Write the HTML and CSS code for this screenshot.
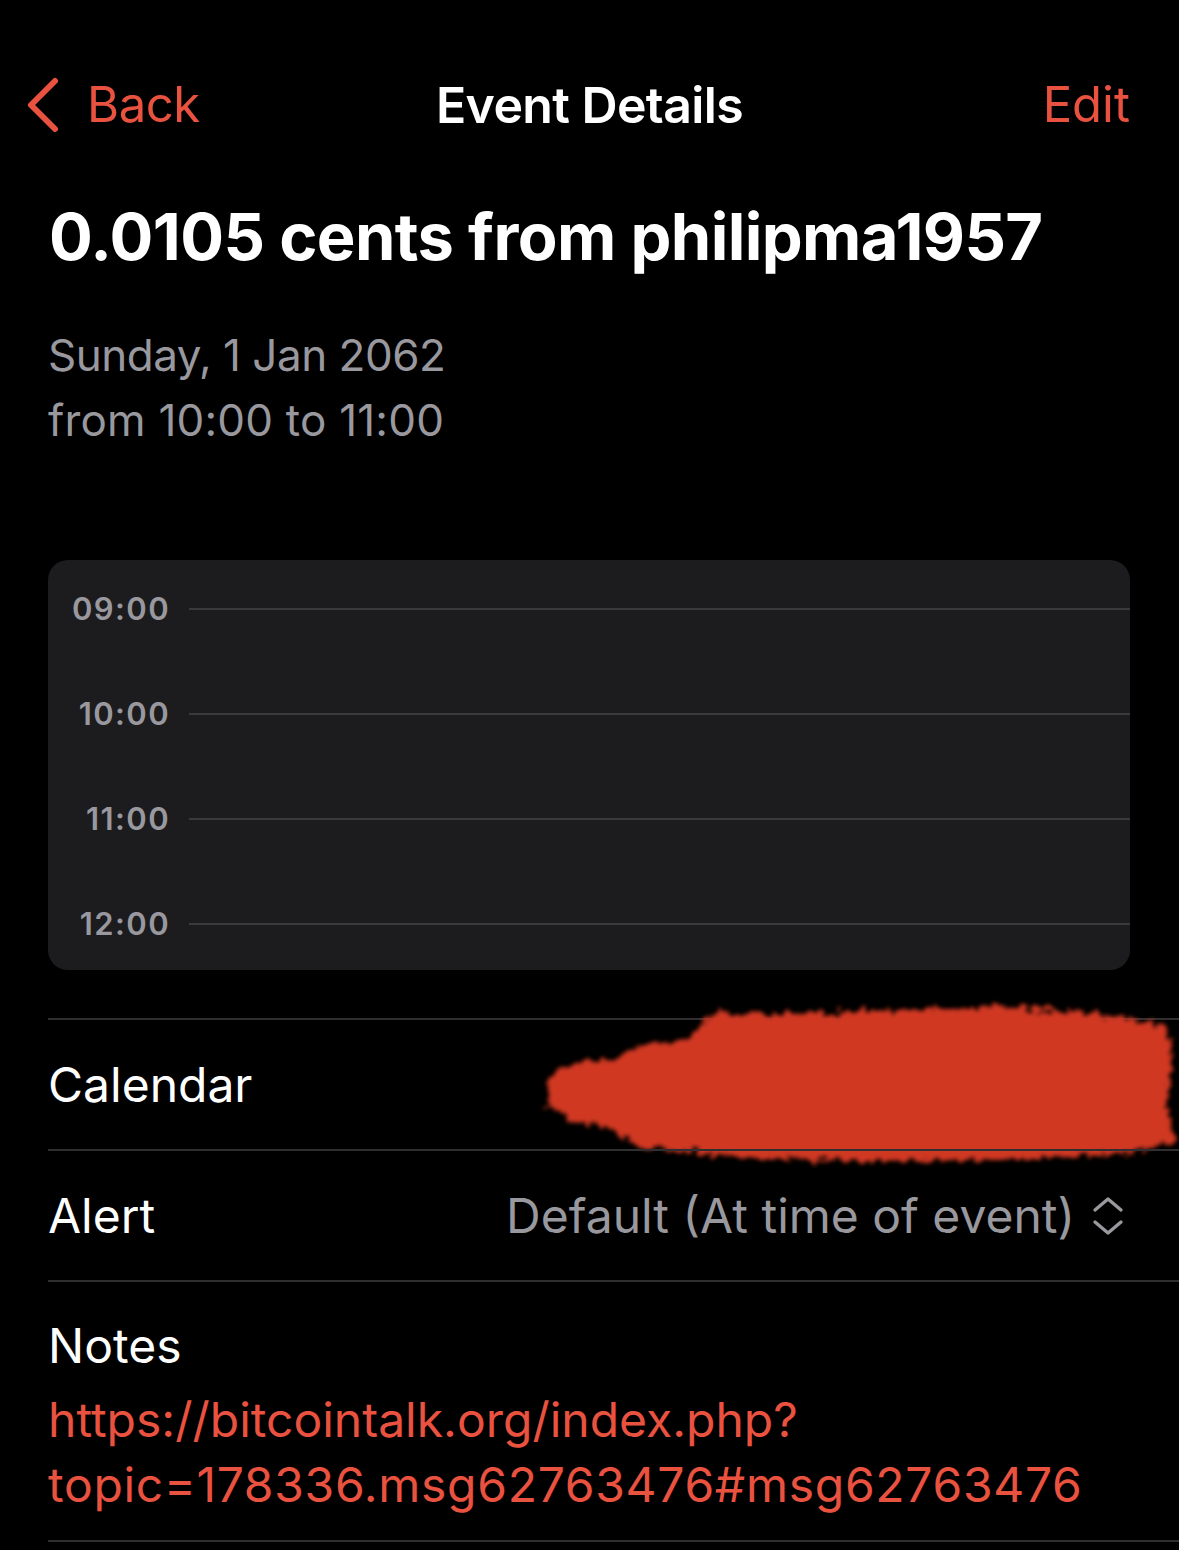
FILE: index.html
```html
<!DOCTYPE html>
<html lang="en">
<head>
    <meta charset="UTF-8">
    <meta name="viewport" content="width=device-width, initial-scale=1.0">
    <title>Event Details</title>
    <link rel="stylesheet" href="styles.css">
</head>
<body>
    <div class="navbar">
        <a class="nav-back" href="#">
            <svg class="back-icon" width="40" height="60" viewBox="0 0 40 60">
                <path d="M32 6 L8 30 L32 54" fill="none" stroke="#ea5240" stroke-width="6" stroke-linecap="round" stroke-linejoin="round"/>
            </svg>
            <span>Back</span>
        </a>
        <div class="nav-title">Event Details</div>
        <a class="nav-edit" href="#">Edit</a>
    </div>

    <div class="content">
        <h1 class="event-title">0.0105 cents from philipma1957</h1>

        <div class="event-when">
            <div>Sunday, 1 Jan 2062</div>
            <div class="event-time">from 10:00 to 11:00</div>
        </div>

        <!-- Day preview -->
        <div class="timeline">
            <div class="hour-row">
                <span class="hour-label">09:00</span>
                <span class="hour-line"></span>
            </div>
            <div class="hour-row">
                <span class="hour-label">10:00</span>
                <span class="hour-line"></span>
            </div>
            <div class="hour-row">
                <span class="hour-label">11:00</span>
                <span class="hour-line"></span>
            </div>
            <div class="hour-row">
                <span class="hour-label">12:00</span>
                <span class="hour-line"></span>
            </div>
        </div>
    </div>

    <div class="detail-list">
        <div class="detail-row calendar-row">
            <span class="detail-label">Calendar</span>
            <!-- scribbled-out calendar name -->
            <svg class="redaction" width="660" height="190" viewBox="530 990 660 190">
                <defs>
                    <filter id="rough" x="-10%" y="-20%" width="120%" height="140%">
                        <feTurbulence type="fractalNoise" baseFrequency="0.12" numOctaves="3" seed="4" result="noise"/>
                        <feDisplacementMap in="SourceGraphic" in2="noise" scale="18" xChannelSelector="R" yChannelSelector="G" result="moved"/>
                        <feGaussianBlur in="moved" stdDeviation="2.2"/>
                    </filter>
                </defs>
                <path filter="url(#rough)" fill="#d03920"
                      d="M548 1082 C548 1066 580 1058 610 1058 L640 1044 L690 1036 L712 1010 L800 1012 L900 1008 L1000 1004 L1100 1012 L1166 1022 L1172 1060 L1166 1100 L1176 1140 L1120 1152 L1000 1158 L880 1160 L760 1156 L640 1146 L615 1128 L570 1118 L548 1104 Z"/>
            </svg>
        </div>
        <div class="detail-row">
            <span class="detail-label">Alert</span>
            <span class="detail-value">
                Default (At time of event)
                <svg class="updown-icon" width="34" height="40" viewBox="0 0 34 40">
                    <path d="M4 14 L17 3 L30 14 M4 26 L17 37 L30 26" fill="none" stroke="#98989e" stroke-width="3.4" stroke-linecap="round" stroke-linejoin="round"/>
                </svg>
            </span>
        </div>
        <div class="detail-row notes-row">
            <span class="detail-label">Notes</span>
            <a class="notes-link" href="#">https://bitcointalk.org/index.php?<br><span class="notes-tail">topic=178336.msg62763476#msg62763476</span></a>
        </div>
    </div>
</body>
</html>
```

FILE: styles.css
```css
body {
    margin: 0;
    padding: 0;
    background-color: #000000;
    color: #ffffff;
    font-family: Inter, "Noto Sans", sans-serif;
    width: 1179px;
    overflow-x: hidden;
}
a {
    text-decoration: none;
}
.navbar {
    display: grid;
    grid-template-columns: 1fr auto 1fr;
    align-items: center;
    height: 60px;
    margin-top: 75px;
    padding: 0 49px;
    font-size: 49px;
    line-height: 60px;
}
.nav-back {
    display: flex;
    align-items: center;
    gap: 24px;
    margin-left: -26px;
    color: #ea5240;
    letter-spacing: -0.4px;
}
.back-icon {
    display: block;
}
.nav-title {
    font-weight: 600;
    font-size: 50px;
    letter-spacing: -0.6px;
}
.nav-edit {
    justify-self: end;
    color: #ea5240;
}
.content {
    padding: 0 49px 0 48px;
}
.event-title {
    margin: 62px 0 0 1px;
    font-size: 65px;
    line-height: 80px;
    font-weight: 700;
    letter-spacing: -0.6px;
}
.event-when {
    margin-top: 46px;
    font-size: 44px;
    line-height: 65px;
    color: #98989e;
    letter-spacing: -0.5px;
}
.event-time {
    letter-spacing: 0.2px;
}
.timeline {
    margin-top: 107px;
    height: 410px;
    box-sizing: border-box;
    padding: 34px 0 31px 0;
    background-color: #1c1c1e;
    border-radius: 20px;
    display: flex;
    flex-direction: column;
    gap: 75px;
}
.hour-row {
    display: flex;
    align-items: center;
    height: 30px;
}
.hour-label {
    width: 122px;
    text-align: right;
    font-size: 31px;
    line-height: 30px;
    font-weight: 600;
    color: #98989e;
    letter-spacing: 1.4px;
}
.hour-line {
    flex: 1;
    height: 2px;
    margin-left: 19px;
    background-color: #3a3a3c;
}
.detail-list {
    margin: 48px 0 0 48px;
}
.detail-row {
    display: flex;
    align-items: center;
    justify-content: space-between;
    height: 131px;
    box-sizing: border-box;
    border-top: 2px solid #2f2f31;
    padding: 0 54px 0 0;
    font-size: 48px;
    position: relative;
}
.detail-label {
    color: #ffffff;
}
.detail-value {
    display: flex;
    align-items: center;
    gap: 16px;
    color: #98989e;
}
.updown-icon {
    display: block;
}
.redaction {
    position: absolute;
    left: 482px;
    top: -28px;
}
.notes-row {
    flex-direction: column;
    align-items: flex-start;
    justify-content: flex-start;
    height: 262px;
    padding-top: 31px;
    border-bottom: 2px solid #2f2f31;
}
.notes-row .detail-label {
    line-height: 65px;
}
.notes-link {
    margin-top: 9px;
    color: #ea5240;
    font-size: 48px;
    line-height: 65px;
}
.notes-tail {
    letter-spacing: 0.7px;
}
```
